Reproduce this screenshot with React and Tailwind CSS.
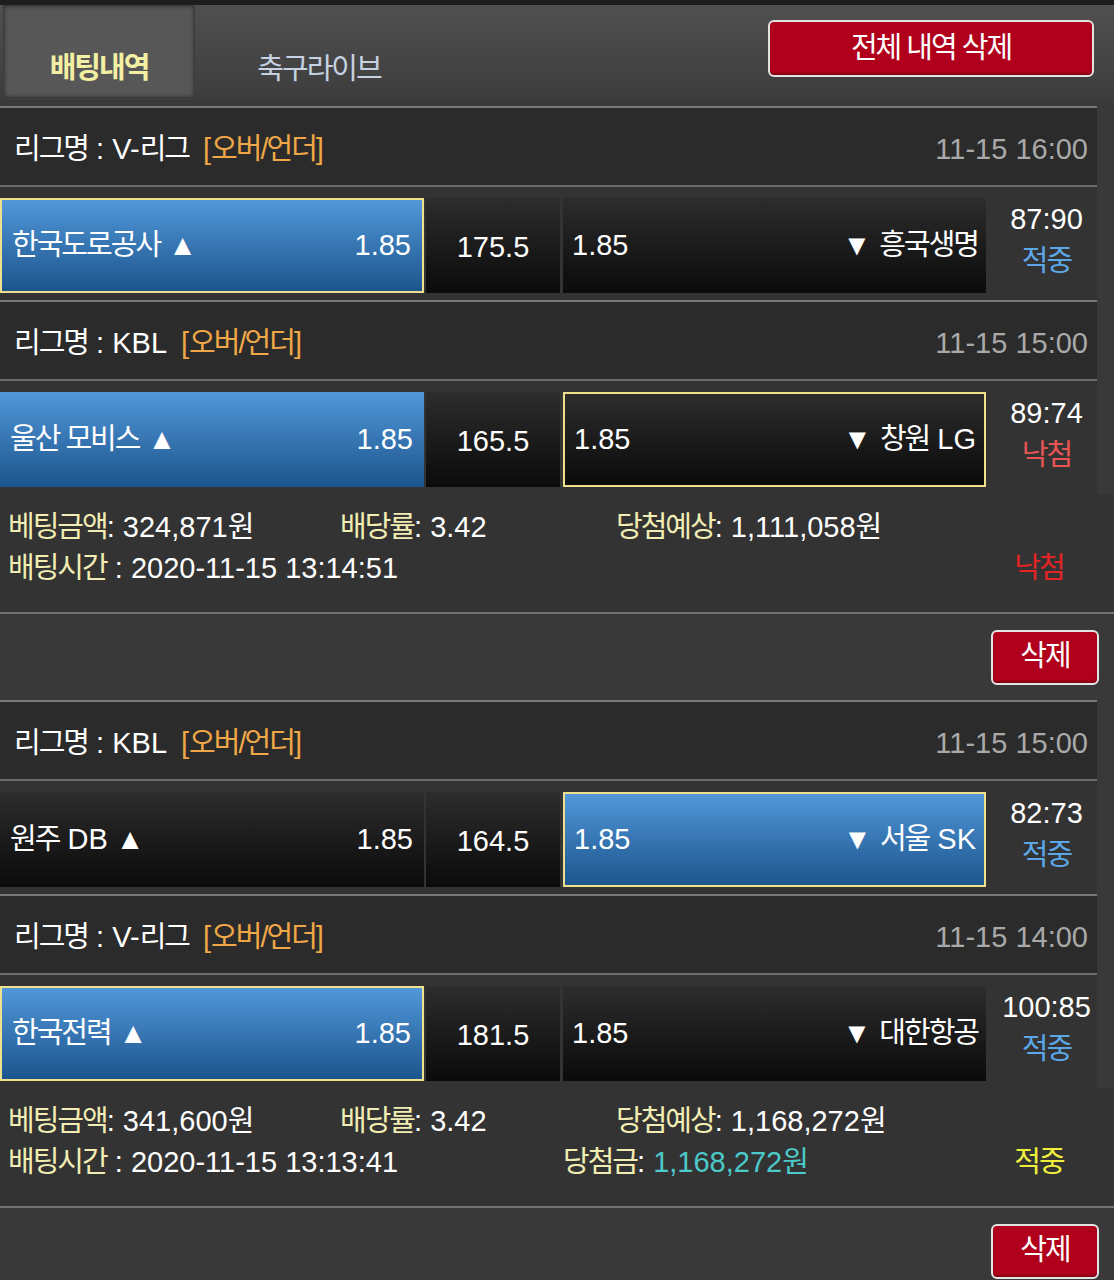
import React from 'react';

const K = ({ children, className = '' }) => (
  <span className={`tracking-[-2px] ${className}`}>{children}</span>
);

const Lbl = ({ children }) => <K className="text-[#f1edb3]">{children}</K>;

const bets = [
  {
    games: [
      { league: 'V-리그', date: '11-15 16:00', home: [<K key="a">한국도로공사</K>], line: '175.5', away: [<K key="a">흥국생명</K>], pick: 'home', win: 'home', score: '87:90', result: '적중' },
      { league: 'KBL', date: '11-15 15:00', home: [<K key="a">울산 모비스</K>], line: '165.5', away: [<K key="a">창원</K>, ' LG'], pick: 'home', win: 'away', score: '89:74', result: '낙첨' },
    ],
    amount: '324,871원',
    rate: '3.42',
    expect: '1,111,058원',
    time: '2020-11-15 13:14:51',
    status: '낙첨',
  },
  {
    games: [
      { league: 'KBL', date: '11-15 15:00', home: [<K key="a">원주</K>, ' DB'], line: '164.5', away: [<K key="a">서울</K>, ' SK'], pick: 'away', win: 'away', score: '82:73', result: '적중' },
      { league: 'V-리그', date: '11-15 14:00', home: [<K key="a">한국전력</K>], line: '181.5', away: [<K key="a">대한항공</K>], pick: 'home', win: 'home', score: '100:85', result: '적중' },
    ],
    amount: '341,600원',
    rate: '3.42',
    expect: '1,168,272원',
    time: '2020-11-15 13:13:41',
    prize: '1,168,272원',
    status: '적중',
  },
];

function cellBg(selected) {
  return selected
    ? 'bg-linear-to-b from-[#5198da] to-[#1c558d]'
    : 'bg-linear-to-b from-[#2d2d2d] to-[#0b0b0b]';
}

function League({ name, date }) {
  const kor = name.replace('V-', '');
  return (
    <div className="h-[81px] border-y-2 border-t-[#787878] border-b-[#6c6c6c] bg-[#2b2b2b] flex items-center justify-between pl-[14px] pr-[9px] pt-[7px]">
      <div>
        <K>리그명</K> : {name.startsWith('V-') ? <>V-<K>{kor}</K></> : name}
        <span className="ml-[14px] text-[#f0a747]">
          [<K>오버/언더</K>]
        </span>
      </div>
      <div className="text-[#a9a9a9]">{date}</div>
    </div>
  );
}

function GameRow({ g }) {
  return (
    <div className="h-[113px] bg-[#333333] flex pt-[11px] pb-[7px]">
      <div
        className={`w-[424px] flex items-center justify-between pl-[10px] pr-[11px] ${cellBg(g.pick === 'home')} ${g.win === 'home' ? 'border-2 border-[#eee08c]' : ''}`}
      >
        <span>{g.home} ▲</span>
        <span>1.85</span>
      </div>
      <div className={`ml-[2px] w-[134px] flex items-center justify-center pt-[4px] ${cellBg(false)}`}>
        {g.line}
      </div>
      <div
        className={`ml-[3px] w-[423px] flex items-center justify-between pl-[9px] pr-[8px] ${cellBg(g.pick === 'away')} ${g.win === 'away' ? 'border-2 border-[#eee08c]' : ''}`}
      >
        <span>1.85</span>
        <span>▼ {g.away}</span>
      </div>
      <div className="flex-1 pl-[10px] flex flex-col items-center justify-center leading-[42px] -mt-[12px]">
        <div>{g.score}</div>
        <K className={g.result === '적중' ? 'text-[#5ba7e7]' : 'text-[#e85353]'}>{g.result}</K>
      </div>
    </div>
  );
}

function Bet({ bet }) {
  return (
    <div>
      <div className="w-[1097px]">
        {bet.games.map((g, i) => (
          <div key={i}>
            <League name={g.league} date={g.date} />
            <GameRow g={g} />
          </div>
        ))}
      </div>
      <div className="bg-[#333333] pt-[13px] pb-[23px] border-b-2 border-[#727272]">
        <div className="flex h-[41px] items-center pl-[8px]">
          <div className="w-[332px]">
            <Lbl>베팅금액</Lbl>: {bet.amount.replace('원', '')}<K>원</K>
          </div>
          <div className="w-[276px]">
            <Lbl>배당률</Lbl>: {bet.rate}
          </div>
          <div>
            <Lbl>당첨예상</Lbl>: {bet.expect.replace('원', '')}<K>원</K>
          </div>
        </div>
        <div className="flex h-[41px] items-center pl-[8px]">
          <div className="w-[555px]">
            <Lbl>배팅시간</Lbl> : {bet.time}
          </div>
          <div className="flex-1">
            {bet.prize && (
              <>
                <Lbl>당첨금</Lbl>:{' '}
                <span className="text-[#4cc9c9]">
                  {bet.prize.replace('원', '')}
                  <K>원</K>
                </span>
              </>
            )}
          </div>
          <div className={`w-[100px] mr-[25px] text-center ${bet.status === '적중' ? 'text-[#f0ef3c]' : 'text-[#e22424]'}`}>
            <K>{bet.status}</K>
          </div>
        </div>
      </div>
      <div className="h-[86px] bg-[#393939] flex items-center justify-end pr-[15px]">
        <button className="w-[108px] h-[55px] rounded-[6px] border-2 border-[#e4e4e4] bg-[#b0001b] text-white shadow-[inset_0_-2px_2px_rgba(0,0,0,0.25)]">
          <K>삭제</K>
        </button>
      </div>
    </div>
  );
}

export default function App() {
  return (
    <div className="w-[1114px] min-h-[1280px] bg-[#393939] text-white text-[29px] font-['Liberation_Sans','Noto_Sans_CJK_KR',sans-serif] overflow-hidden">
      <div className="h-[100px] border-t-[5px] border-[#1d1d1d] bg-linear-to-b from-[#505050] to-[#3d3d3d] flex">
        <div className="ml-[3px] w-[192px] h-[93px] bg-[#575757] border border-[#3b3b3b] shadow-[inset_0_0_4px_rgba(0,0,0,0.5)] flex items-end justify-center pb-[14px] leading-[29px] font-bold text-[#f3f0a4]">
          <K>배팅내역</K>
        </div>
        <div className="w-[248px] flex items-end justify-center pb-[16px] leading-[29px] text-[#c6d1e1]">
          <K>축구라이브</K>
        </div>
        <div className="flex-1 flex justify-end items-start pt-[15px] pr-[20px]">
          <button className="w-[326px] h-[57px] rounded-[6px] border-2 border-[#e2e2e2] bg-[#b1001c] text-white shadow-[inset_0_-2px_2px_rgba(0,0,0,0.25)]">
            <K>전체 내역 삭제</K>
          </button>
        </div>
      </div>
      <div className="h-[6px]" />
      {bets.map((b, i) => (
        <Bet key={i} bet={b} />
      ))}
    </div>
  );
}
